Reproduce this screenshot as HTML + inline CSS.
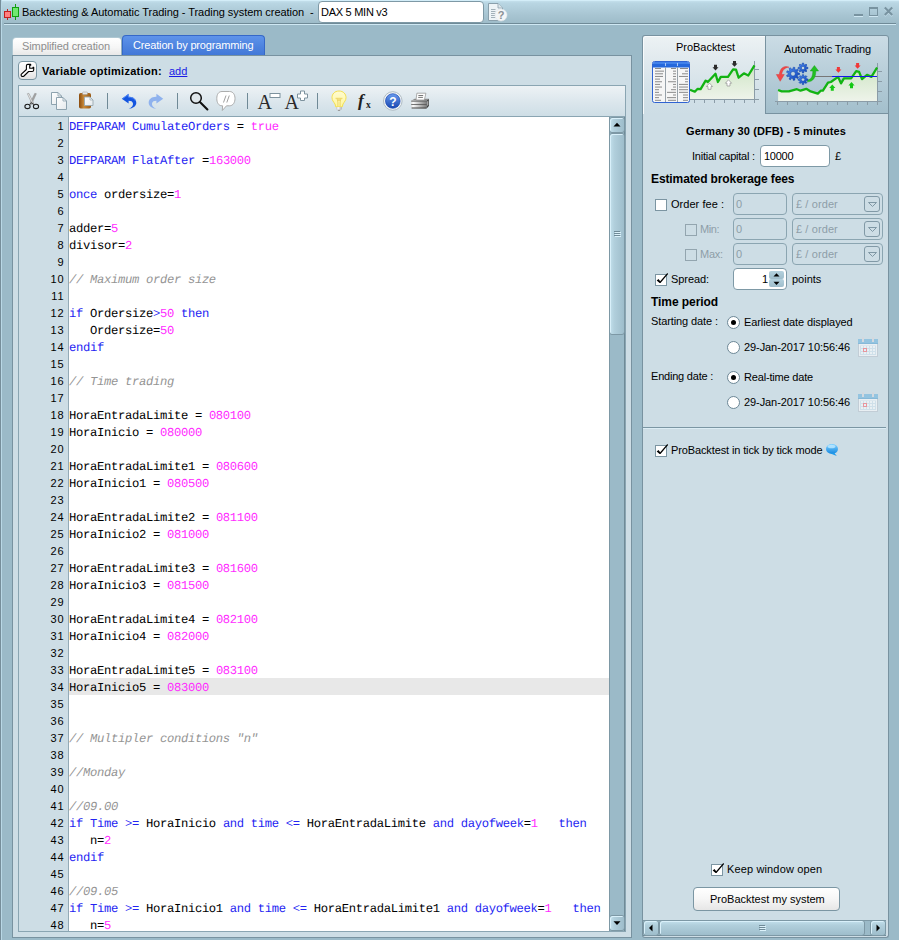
<!DOCTYPE html>
<html>
<head>
<meta charset="utf-8">
<title>Backtesting &amp; Automatic Trading</title>
<style>
*{box-sizing:border-box;margin:0;padding:0}
html,body{width:899px;height:940px;overflow:hidden}
body{background:#9bbac8;font-family:"Liberation Sans",sans-serif;font-size:11px;color:#000;position:relative}
.abs{position:absolute}
.t{position:absolute;white-space:nowrap;line-height:14px;height:14px}
.b{font-weight:bold}
/* window chrome */
#wl0{left:0;top:0;width:1px;height:940px;background:#768e9a}
#wl1{left:1px;top:0;width:1px;height:940px;background:#b9d8e6}
#titlebar{left:2px;top:0;width:897px;height:23px;background:linear-gradient(#c9e4f0 0,#b9d6e3 3px,#a9c6d3 14px,#9ebcc9 23px)}
#ttop{left:0;top:0;width:899px;height:1px;background:#d3edf8}
#tline1{left:4px;top:23px;width:892px;height:1px;background:#6f8a97}
#tline2{left:4px;top:24px;width:892px;height:1px;background:#cfe8f3}
/* panels */
.panel{background:#cddde5;border:1px solid #7892a0}
#lpanel{left:12px;top:55px;width:620px;height:883px}
#rpanel{left:642px;top:113px;width:247px;height:825px;border-top:none;border-radius:0 0 3px 3px}
/* tabs */
.tab{position:absolute;border:1px solid #7892a0;border-bottom:none;border-radius:3px 3px 0 0}
#tab1{left:13px;top:38px;width:108px;height:17px;background:linear-gradient(#ffffff,#f6f6f6 55%,#e8e8e8);border:none;box-shadow:0 -1px 0 0 #afc8d3,-1px 0 0 0 #afc8d3,1px 0 0 0 #93b0bd}
#tab2{left:122px;top:35px;width:143px;height:20px;border-radius:4px 4px 0 0;background:linear-gradient(#5e93ea,#4f85e0 50%,#4278d8);border-color:#3568c8;color:#fff}
/* inputs */
.inp{position:absolute;border:1px solid #7e99a6;border-radius:4px;background:#fff;height:22px}
.inp.dis{background:#cddde5;border-color:#8ba5b1;color:#8d9ea8}
.cb{position:absolute;width:12px;height:12px;border:1px solid #7c95a2;background:#fff}
.cb.dis{background:#cddde5;border-color:#93a5af}
.radio{position:absolute;width:13px;height:13px;border:1px solid #6c8796;border-radius:50%;background:#fff}
.radio.on:after{content:"";position:absolute;left:3px;top:3px;width:5px;height:5px;border-radius:50%;background:#000}
.grey{color:#8d9ea8}
/* code */
#codearea{left:18px;top:116px;width:608px;height:816px;border:1px solid #8aa5b2;background:#fff;overflow:hidden}
#gutter{left:0;top:0;width:49px;height:814px;background:#cddde5}
#gutline{left:49px;top:0;width:1px;height:814px;background:#93aab6}
.ln{position:absolute;left:0;width:45.5px;text-align:right;font-size:11px;letter-spacing:0.9px;line-height:17px;height:17px;color:#000;padding-top:1px}
.cl{position:absolute;left:50px;white-space:pre;font-family:"Liberation Mono",monospace;font-size:12.2px;letter-spacing:-0.32px;text-rendering:geometricPrecision;line-height:17px;height:17px;color:#000;padding-top:2px}
.k{color:#2424f2}
.n{color:#ff2cff}
.c{color:#949494;font-style:italic}

#toolbar{left:18px;top:85px;width:608px;height:32px;border:1px solid #8aa5b2;background:linear-gradient(#edf2f5,#dbe6ec 55%,#cedee6)}
#wrench{left:18px;top:61px;width:19px;height:19px;border:1px solid #7a95a2;border-radius:4px;background:linear-gradient(#ffffff,#f2f2f2 55%,#e2e2e2)}
.sep{position:absolute;top:93px;width:1px;height:16px;background:#6f8996}
/* vertical scrollbar */
#vsb{left:609px;top:117px;width:16px;height:814px;background:#9bbac8;border-left:1px solid #7d98a5;border-right:1px solid #6f8a97}
.sbtn{position:absolute;border:1px solid #7d98a5;border-radius:3px;box-shadow:inset 1px 1px 0 #d9f0fa}
.vgrad{background:linear-gradient(90deg,#c3e0ec,#b1cfdc 30%,#9ebdcb)}
.hgrad{background:linear-gradient(#c3e0ec,#b1cfdc 30%,#9ebdcb)}
#svgall{left:0;top:0;width:899px;height:940px;pointer-events:none}
a.lnk{color:#1a1ae6;text-decoration:underline}

#rtab1{left:642px;top:35px;width:124px;height:79px;border:1px solid #7892a0;border-bottom:none;border-radius:3px 0 0 0;background:linear-gradient(#edf2f4,#e3ebef 25%,#d3e1e8 70%,#cddde5);box-shadow:inset 1px 1px 0 #f8fbfc}
#rtab2{left:765px;top:35px;width:124px;height:79px;border:1px solid #7892a0;border-radius:0 3px 0 0;background:linear-gradient(#cbdce5,#b9cfda 45%,#a3bfcc)}
.combo{position:absolute;height:22px;width:91px;border:1px solid #8ba5b1;border-radius:4px;background:#cddde5}
.combo i{position:absolute;right:2px;top:2px;width:16px;height:16px;border:1px solid #8199a6;border-radius:3px}
#rsep{left:643px;top:427px;width:243px;height:2px;background:linear-gradient(#7b96a3 50%,#dcedf5 50%)}
#btn{left:693px;top:887px;width:147px;height:24px;border:1px solid #7b96a3;border-radius:4px;background:linear-gradient(#ffffff,#f6f6f6 50%,#e6e6e6)}
#hsb{left:643px;top:920px;width:243px;height:16px;background:#9bbac8;border-top:1px solid #7d98a5;border-bottom:1px solid #6f8a97}
.spin{position:absolute;left:769px;width:15px;height:8px;background:linear-gradient(#b4d1de,#9fbdcb);border-radius:2px}
</style>
</head>
<body>
<div class="abs" id="titlebar"></div>
<div class="abs" id="ttop"></div>
<div class="abs" id="wl0"></div>
<div class="abs" id="wl1"></div>
<div class="abs" id="tline1"></div>
<div class="abs" id="tline2"></div>

<!-- TITLE -->
<div class="inp" style="left:318px;top:1px;width:166px;height:22px"></div>

<!-- LEFT PANEL -->
<div class="abs panel" id="lpanel"></div>
<div class="tab" id="tab1"></div>
<div class="tab" id="tab2"></div>


<div class="abs" id="wrench"></div>
<div class="t" style="left:169px;top:64px"><a class="lnk">add</a></div>
<div class="abs" id="toolbar"></div>
<div class="sep" style="left:107px"></div><div class="sep" style="left:177px"></div><div class="sep" style="left:247px"></div><div class="sep" style="left:317px"></div>
<!-- CODE AREA -->
<div class="abs" id="codearea">
<div class="abs" id="gutter"></div>
<div class="abs" id="gutline"></div>
<div class="abs" style="left:50px;top:561px;width:541px;height:17px;background:#e8e8e8"></div>
<div class="ln" style="top:0px">1</div>
<div class="cl" style="top:0px"><span class="k">DEFPARAM CumulateOrders</span> = <span class="n">true</span></div>
<div class="ln" style="top:17px">2</div>
<div class="ln" style="top:34px">3</div>
<div class="cl" style="top:34px"><span class="k">DEFPARAM FlatAfter</span> =<span class="n">163000</span></div>
<div class="ln" style="top:51px">4</div>
<div class="ln" style="top:68px">5</div>
<div class="cl" style="top:68px"><span class="k">once</span> ordersize=<span class="n">1</span></div>
<div class="ln" style="top:85px">6</div>
<div class="ln" style="top:102px">7</div>
<div class="cl" style="top:102px">adder=<span class="n">5</span></div>
<div class="ln" style="top:119px">8</div>
<div class="cl" style="top:119px">divisor=<span class="n">2</span></div>
<div class="ln" style="top:136px">9</div>
<div class="ln" style="top:153px">10</div>
<div class="cl" style="top:153px"><span class="c">// Maximum order size</span></div>
<div class="ln" style="top:170px">11</div>
<div class="ln" style="top:187px">12</div>
<div class="cl" style="top:187px"><span class="k">if</span> Ordersize<span class="k">&gt;</span><span class="n">50</span><span class="k"> then</span></div>
<div class="ln" style="top:204px">13</div>
<div class="cl" style="top:204px">   Ordersize=<span class="n">50</span></div>
<div class="ln" style="top:221px">14</div>
<div class="cl" style="top:221px"><span class="k">endif</span></div>
<div class="ln" style="top:238px">15</div>
<div class="ln" style="top:255px">16</div>
<div class="cl" style="top:255px"><span class="c">// Time trading</span></div>
<div class="ln" style="top:272px">17</div>
<div class="ln" style="top:289px">18</div>
<div class="cl" style="top:289px">HoraEntradaLimite = <span class="n">080100</span></div>
<div class="ln" style="top:306px">19</div>
<div class="cl" style="top:306px">HoraInicio = <span class="n">080000</span></div>
<div class="ln" style="top:323px">20</div>
<div class="ln" style="top:340px">21</div>
<div class="cl" style="top:340px">HoraEntradaLimite1 = <span class="n">080600</span></div>
<div class="ln" style="top:357px">22</div>
<div class="cl" style="top:357px">HoraInicio1 = <span class="n">080500</span></div>
<div class="ln" style="top:374px">23</div>
<div class="ln" style="top:391px">24</div>
<div class="cl" style="top:391px">HoraEntradaLimite2 = <span class="n">081100</span></div>
<div class="ln" style="top:408px">25</div>
<div class="cl" style="top:408px">HoraInicio2 = <span class="n">081000</span></div>
<div class="ln" style="top:425px">26</div>
<div class="ln" style="top:442px">27</div>
<div class="cl" style="top:442px">HoraEntradaLimite3 = <span class="n">081600</span></div>
<div class="ln" style="top:459px">28</div>
<div class="cl" style="top:459px">HoraInicio3 = <span class="n">081500</span></div>
<div class="ln" style="top:476px">29</div>
<div class="ln" style="top:493px">30</div>
<div class="cl" style="top:493px">HoraEntradaLimite4 = <span class="n">082100</span></div>
<div class="ln" style="top:510px">31</div>
<div class="cl" style="top:510px">HoraInicio4 = <span class="n">082000</span></div>
<div class="ln" style="top:527px">32</div>
<div class="ln" style="top:544px">33</div>
<div class="cl" style="top:544px">HoraEntradaLimite5 = <span class="n">083100</span></div>
<div class="ln" style="top:561px">34</div>
<div class="cl" style="top:561px">HoraInicio5 = <span class="n">083000</span></div>
<div class="ln" style="top:578px">35</div>
<div class="ln" style="top:595px">36</div>
<div class="ln" style="top:612px">37</div>
<div class="cl" style="top:612px"><span class="c">// Multipler conditions "n"</span></div>
<div class="ln" style="top:629px">38</div>
<div class="ln" style="top:646px">39</div>
<div class="cl" style="top:646px"><span class="c">//Monday</span></div>
<div class="ln" style="top:663px">40</div>
<div class="ln" style="top:680px">41</div>
<div class="cl" style="top:680px"><span class="c">//09.00</span></div>
<div class="ln" style="top:697px">42</div>
<div class="cl" style="top:697px"><span class="k">if Time &gt;=</span> HoraInicio <span class="k">and time &lt;=</span> HoraEntradaLimite <span class="k">and dayofweek</span>=<span class="n">1</span><span class="k">   then</span></div>
<div class="ln" style="top:714px">43</div>
<div class="cl" style="top:714px">   n=<span class="n">2</span></div>
<div class="ln" style="top:731px">44</div>
<div class="cl" style="top:731px"><span class="k">endif</span></div>
<div class="ln" style="top:748px">45</div>
<div class="ln" style="top:765px">46</div>
<div class="cl" style="top:765px"><span class="c">//09.05</span></div>
<div class="ln" style="top:782px">47</div>
<div class="cl" style="top:782px"><span class="k">if Time &gt;=</span> HoraInicio1 <span class="k">and time &lt;=</span> HoraEntradaLimite1 <span class="k">and dayofweek</span>=<span class="n">1</span><span class="k">   then</span></div>
<div class="ln" style="top:799px">48</div>
<div class="cl" style="top:799px">   n=<span class="n">5</span></div>
</div>


<!-- V SCROLLBAR -->
<div class="abs" id="vsb"></div>
<div class="sbtn vgrad" style="left:609px;top:117px;width:16px;height:16px"></div>
<div class="sbtn vgrad" style="left:609px;top:133px;width:16px;height:202px"></div>
<div class="sbtn vgrad" style="left:609px;top:915px;width:16px;height:16px"></div>

<!-- RIGHT PANEL -->
<div class="abs panel" id="rpanel"></div>
<div class="abs" id="rtab2"></div>
<div class="abs" id="rtab1"></div>
<div class="inp" style="left:760px;top:145px;width:70px"></div>
<div class="cb" style="left:655px;top:199px"></div>
<div class="cb dis" style="left:685px;top:224px"></div>
<div class="cb dis" style="left:685px;top:249px"></div>
<div class="inp dis" style="left:733px;top:193px;width:54px"></div>
<div class="inp dis" style="left:733px;top:218px;width:54px"></div>
<div class="inp dis" style="left:733px;top:243px;width:54px"></div>
<div class="combo" style="left:792px;top:193px"><i></i></div>
<div class="combo" style="left:792px;top:218px"><i></i></div>
<div class="combo" style="left:792px;top:243px"><i></i></div>
<div class="cb" style="left:655px;top:274px"></div>
<div class="inp" style="left:733px;top:268px;width:54px"></div>
<div class="spin" style="top:271px"></div><div class="spin" style="top:279px"></div>
<div class="radio on" style="left:727px;top:316px"></div>
<div class="radio" style="left:727px;top:341px"></div>
<div class="radio on" style="left:727px;top:371px"></div>
<div class="radio" style="left:727px;top:396px"></div>
<div class="abs" id="rsep"></div>
<div class="cb" style="left:655px;top:445px"></div>
<div class="cb" style="left:711px;top:864px"></div>
<div class="abs" id="btn"></div>
<div class="abs" id="hsb"></div>
<div class="sbtn hgrad" style="left:643px;top:920px;width:16px;height:16px"></div>
<div class="sbtn hgrad" style="left:659px;top:920px;width:206px;height:16px"></div>
<div class="sbtn hgrad" style="left:870px;top:920px;width:16px;height:16px"></div>



<!-- TEXTS -->
<!--TEXTS-START-->
<div class="t" style="left:22px;top:5px;letter-spacing:-0.05px">Backtesting &amp; Automatic Trading - Trading system creation&nbsp; -</div>
<div class="t" style="left:321px;top:5px;letter-spacing:-0.27px">DAX 5 MIN v3</div>
<div class="t" style="left:22px;top:39px;color:#8e8e8e;letter-spacing:-0.10px">Simplified creation</div>
<div class="t" style="left:133px;top:38px;color:#fff;letter-spacing:-0.16px">Creation by programming</div>
<div class="t b" style="left:42px;top:64px;letter-spacing:0.28px">Variable optimization:</div>
<div class="t" style="left:676px;top:40px;letter-spacing:-0.03px">ProBacktest</div>
<div class="t" style="left:784px;top:42px;letter-spacing:-0.09px">Automatic Trading</div>
<div class="t b" style="left:686px;top:124px;letter-spacing:0.10px">Germany 30 (DFB) - 5 minutes</div>
<div class="t" style="left:692px;top:149px;letter-spacing:-0.22px">Initial capital :</div>
<div class="t" style="left:764px;top:149px;letter-spacing:-0.25px">10000</div>
<div class="t" style="left:835px;top:149px">&pound;</div>
<div class="t b" style="left:651px;top:172px;font-size:12px;letter-spacing:-0.11px">Estimated brokerage fees</div>
<div class="t" style="left:671px;top:197px;letter-spacing:0.04px">Order fee :</div>
<div class="t" style="left:700px;top:222px;color:#8d9ea8;letter-spacing:-0.40px">Min:</div>
<div class="t" style="left:700px;top:247px;color:#8d9ea8;letter-spacing:-0.28px">Max:</div>
<div class="t" style="left:736px;top:197px;color:#8d9ea8">0</div>
<div class="t" style="left:736px;top:222px;color:#8d9ea8">0</div>
<div class="t" style="left:736px;top:247px;color:#8d9ea8">0</div>
<div class="t" style="left:796px;top:197px;color:#8d9ea8;letter-spacing:0.10px">&pound; / order</div>
<div class="t" style="left:796px;top:222px;color:#8d9ea8;letter-spacing:0.10px">&pound; / order</div>
<div class="t" style="left:796px;top:247px;color:#8d9ea8;letter-spacing:0.10px">&pound; / order</div>
<div class="t" style="left:671px;top:272px;letter-spacing:-0.07px">Spread:</div>
<div class="t" style="left:762px;top:272px">1</div>
<div class="t" style="left:792px;top:272px">points</div>
<div class="t b" style="left:651px;top:295px;font-size:12px;letter-spacing:-0.07px">Time period</div>
<div class="t" style="left:651px;top:314px;letter-spacing:-0.11px">Starting date :</div>
<div class="t" style="left:744px;top:315px;letter-spacing:-0.09px">Earliest date displayed</div>
<div class="t" style="left:744px;top:340px;letter-spacing:-0.08px">29-Jan-2017 10:56:46</div>
<div class="t" style="left:651px;top:369px;letter-spacing:-0.21px">Ending date :</div>
<div class="t" style="left:744px;top:370px;letter-spacing:-0.18px">Real-time date</div>
<div class="t" style="left:744px;top:395px;letter-spacing:-0.08px">29-Jan-2017 10:56:46</div>
<div class="t" style="left:671px;top:443px;letter-spacing:-0.12px">ProBacktest in tick by tick mode</div>
<div class="t" style="left:727px;top:862px;letter-spacing:0.14px">Keep window open</div>
<div class="t" style="left:710px;top:892px;letter-spacing:-0.01px">ProBacktest my system</div>
<!--TEXTS-END-->

<!-- ICONS -->
<svg class="abs" id="svgall" viewBox="0 0 899 940">
<defs>
<linearGradient id="gBlue" x1="0" y1="0" x2="0" y2="1"><stop offset="0" stop-color="#6a9cf0"/><stop offset="1" stop-color="#1846b0"/></linearGradient>
<linearGradient id="gBrown" x1="0" y1="0" x2="1" y2="0"><stop offset="0" stop-color="#8a4a0c"/><stop offset=".4" stop-color="#c88a3a"/><stop offset="1" stop-color="#9a5a14"/></linearGradient>
<linearGradient id="gGrey" x1="0" y1="0" x2="0" y2="1"><stop offset="0" stop-color="#f4f4f4"/><stop offset="1" stop-color="#7a7a7a"/></linearGradient>
<linearGradient id="gPage" x1="0" y1="0" x2="1" y2="1"><stop offset="0" stop-color="#ffffff"/><stop offset="1" stop-color="#e4e9ec"/></linearGradient>
<linearGradient id="gArea" x1="0" y1="0" x2="0" y2="1"><stop offset="0" stop-color="#cfe6c6"/><stop offset="1" stop-color="#eef3ea"/></linearGradient>
<linearGradient id="gGear" x1="0" y1="0" x2="1" y2="1"><stop offset="0" stop-color="#4f8df0"/><stop offset="1" stop-color="#0c3fb4"/></linearGradient>
<linearGradient id="gBub" x1="0" y1="0" x2="0" y2="1"><stop offset="0" stop-color="#7fd0ff"/><stop offset="1" stop-color="#1488e0"/></linearGradient>
<linearGradient id="gPrn" x1="0" y1="0" x2="1" y2="0"><stop offset="0" stop-color="#dcdcdc"/><stop offset=".12" stop-color="#fbfbfb"/><stop offset="1" stop-color="#7c7c7c"/></linearGradient>
<linearGradient id="gBulb" x1="0" y1="0" x2="0" y2="1"><stop offset="0" stop-color="#fffbd2"/><stop offset=".35" stop-color="#fffac0"/><stop offset="1" stop-color="#fff59c"/></linearGradient>
<linearGradient id="gBase" x1="0" y1="0" x2="1" y2="0"><stop offset="0" stop-color="#c4c4c4"/><stop offset=".35" stop-color="#f8f8f8"/><stop offset="1" stop-color="#b0b0b0"/></linearGradient>
</defs>

<!-- title candle icon -->
<g shape-rendering="crispEdges">
<rect x="7" y="9" width="1" height="11" fill="#c02020"/><rect x="4" y="11" width="7" height="7" fill="#ff8080" stroke="none"/><rect x="4.5" y="11.5" width="6" height="6" fill="none" stroke="#c02020" stroke-width="1"/>
<rect x="15" y="4" width="1" height="16" fill="#10a010"/><rect x="12" y="7" width="7" height="10" fill="#70e870"/><rect x="12.5" y="7.5" width="6" height="9" fill="none" stroke="#10a010" stroke-width="1"/>
</g>
<!-- window buttons -->
<g shape-rendering="crispEdges">
<rect x="854" y="14" width="9" height="2" fill="#7893a0"/><rect x="854" y="16" width="9" height="1" fill="#cfe7f2"/>
<rect x="869" y="7" width="9" height="2" fill="#7893a0"/><rect x="869" y="9" width="1" height="6" fill="#7893a0"/><rect x="877" y="9" width="1" height="6" fill="#7893a0"/><rect x="869" y="15" width="9" height="1" fill="#7893a0"/><rect x="869" y="16" width="9" height="1" fill="#cfe7f2"/>
</g>
<path d="M884.800 8.800 L892.200 16.200 M892.200 8.800 L884.800 16.200" stroke="#cfe7f2" stroke-width="1.600" fill="none" opacity=".7"/>
<path d="M884.800 7.600 L892.200 15 M892.200 7.600 L884.800 15" stroke="#7893a0" stroke-width="2.100" fill="none"/>
<!-- doc help icon -->
<path d="M488.5 3.5 H498 L502.5 8 V20.5 H488.5 Z" fill="#eef4f7" stroke="#8aa0ac"/>
<path d="M498 3.5 V8 H502.5" fill="#dfe8ec" stroke="#8aa0ac" stroke-width=".8"/>
<path d="M491 9.500 H495.500 M491 11.500 H495.500 M491 13.500 H495.500 M491 15.500 H495.500 M491 17.500 H495.500" stroke="#a3b1b9" stroke-width="1"/>
<circle cx="501" cy="15" r="6" fill="#f4f6f7" stroke="#e2e8eb" stroke-width=".6"/>
<text x="501" y="19" font-family="Liberation Sans" font-weight="bold" font-size="11" fill="#8a8f94" text-anchor="middle">?</text>
<!-- wrench -->
<path d="M21.4 74.2 L26.4 69.5 L26.4 65.800 Q26.4 64.400 27.800 64.400 L30.7 64.400 L30.7 65.200 L29.700 65.200 L29.700 68.300 L33 68.300 L33 67.300 L33.700 67.300 L33.700 69.900 Q33.700 71.500 32.100 71.500 L28.600 71.500 L24 76 Q22.700 77.100 21.500 76 Q20.600 75.100 21.400 74.200 Z" fill="#fff" stroke="#000" stroke-width="1.1" stroke-linejoin="round"/>
<!-- scissors -->
<path d="M27.300 93.700 L28.900 93.300 L33.900 103.600 L32.300 104.600 Z" fill="#b9b9b9" stroke="#8e8e8e" stroke-width=".4"/>
<path d="M36.400 93.700 L34.800 93.300 L29.800 103.600 L31.400 104.600 Z" fill="#a4a4a4" stroke="#7e7e7e" stroke-width=".4"/>
<path d="M28.300 94.200 L32.800 103.200" stroke="#f2f2f2" stroke-width=".7"/>
<ellipse cx="27.500" cy="106.400" rx="2.600" ry="2.200" fill="none" stroke="#1c1c1c" stroke-width="1.100"/>
<ellipse cx="36" cy="106.400" rx="2.600" ry="2.200" fill="none" stroke="#1c1c1c" stroke-width="1.100"/>
<path d="M29.500 104.700 L31.800 102.700 L34 104.700" fill="none" stroke="#333" stroke-width="1"/>
<!-- copy -->
<path d="M51.5 92.5 H58 L61.5 96 V104.5 H51.5 Z" fill="url(#gPage)" stroke="#8da2ae"/>
<path d="M58 92.5 V96 H61.5" fill="none" stroke="#8da2ae" stroke-width=".8"/>
<path d="M56.500 97.500 H63 L66.500 101 V109.500 H56.500 Z" fill="url(#gPage)" stroke="#8da2ae"/>
<path d="M63 97.500 V101 H66.500" fill="none" stroke="#8da2ae" stroke-width=".8"/>
<!-- paste -->
<rect x="79" y="93" width="12" height="15.500" rx="1.8" fill="url(#gBrown)"/>
<rect x="82.500" y="92" width="5" height="2.600" rx=".8" fill="#e8e8e8" stroke="#999" stroke-width=".5"/>
<path d="M84.500 97 H90 L93 100 V105.500 H84.500 Z" fill="url(#gPage)" stroke="#9aa9b2" stroke-width=".9"/>
<path d="M90 97 V100 H93" fill="none" stroke="#9aa9b2" stroke-width=".7"/>
<!-- undo -->
<path d="M121.800 98.700 L128.600 93.800 L128.600 96.800 C133.500 96.600 136.600 99.600 136.300 103.200 C136 106.200 133 108.300 128.800 108.700 C131.600 107.400 133.400 105.600 133 103.400 C132.600 101.400 131 100.700 128.600 100.700 L128.600 103.600 Z" fill="#1455e0"/>
<path d="M122.500 98.700 L128.300 94.600 L128.300 97.200 C131.500 97.100 134.500 98.300 135.600 101" fill="none" stroke="#5f93f5" stroke-width=".8"/>
<!-- redo -->
<path d="M163.200 98.700 L156.400 93.800 L156.400 96.800 C151.500 96.600 148.400 99.600 148.700 103.200 C149 106.200 152 108.300 156.200 108.700 C153.400 107.400 151.600 105.600 152 103.400 C152.400 101.400 154 100.700 156.400 100.700 L156.400 103.600 Z" fill="#8fb2ee"/>
<!-- magnifier -->
<circle cx="196" cy="98" r="5.300" fill="#dfe6ea" stroke="#111" stroke-width="1.500"/>
<path d="M199.900 102 L207.400 109.400" stroke="#111" stroke-width="2.100" stroke-linecap="round"/>
<!-- comment bubble -->
<path d="M222 91.500 H229.500 C233 91.500 235 94.500 235 98.500 C235 102.500 233 105.800 229.500 105.800 H226.500 L222.300 110.500 L222.600 105.800 H222 C218.500 105.800 216.800 102.500 216.800 98.500 C216.800 94.500 218.500 91.500 222 91.500 Z" fill="#fff" stroke="#a4a4a4" stroke-width=".9"/>
<path d="M223.500 102.500 L226 95.500 M226.800 102.500 L229.300 95.500" stroke="#a0a0a0" stroke-width="1"/>
<!-- A- -->
<text x="257.500" y="109" font-family="Liberation Serif" font-size="20" fill="#2a2a2a">A</text>
<rect x="270" y="93.500" width="10" height="4" fill="#fff" stroke="#7d929e" stroke-width="1"/>
<!-- A+ -->
<text x="284.500" y="109" font-family="Liberation Serif" font-size="20" fill="#2a2a2a">A</text>
<path d="M300.500 91 H304.500 V94 H307.500 V98 H304.500 V100.500 H300.500 V98 H297.500 V94 H300.500 Z" fill="#fff" stroke="#7d929e" stroke-width="1"/>
<!-- bulb -->
<path d="M339 91 C334.500 91 332 94.200 332 97.600 C332 100.300 333.600 101.800 335 104 L335.800 106.900 H342.200 L343 104 C344.400 101.800 346 100.300 346 97.600 C346 94.200 343.500 91 339 91 Z" fill="url(#gBulb)" stroke="#f3de48" stroke-width=".95"/>
<path d="M335.500 98.300 H342.500 M337 98.500 L337.900 102 V106.500 M341 98.500 L340.100 102 V106.500 M337.900 98.800 L339 101 L340.100 98.800" fill="none" stroke="#e8cd55" stroke-width=".8"/>
<rect x="336.200" y="107" width="5.600" height="2.700" rx=".6" fill="url(#gBase)"/>
<path d="M337.400 109.700 H340.600 L339.900 110.900 H338.100 Z" fill="#9c9c9c"/>
<!-- fx -->
<text x="358" y="105.800" font-family="Liberation Serif" font-style="italic" font-weight="bold" font-size="17.500" fill="#1f1f1f">f</text>
<text x="366" y="108" font-family="Liberation Serif" font-weight="bold" font-size="9.500" fill="#1f1f1f">x</text>
<!-- help -->
<circle cx="392.800" cy="101" r="9.300" fill="#f2f5f7" stroke="#a9b5bd" stroke-width=".9"/>
<circle cx="392.800" cy="101" r="7.300" fill="url(#gBlue)" stroke="#1a49b0" stroke-width=".7"/>
<text x="392.800" y="105.500" font-family="Liberation Sans" font-weight="bold" font-size="12" fill="#fff" text-anchor="middle">?</text>
<!-- printer -->
<path d="M411.300 100.800 L414.600 98.700 H428.900 L426.600 100.800 Z" fill="#8c8c8c"/>
<rect x="411.200" y="100.600" width="15.400" height="8" rx=".8" fill="url(#gPrn)"/>
<rect x="411.200" y="100.600" width="15.400" height="1.200" fill="#6a6a6a" opacity=".85"/>
<rect x="411.200" y="104.100" width="15.400" height=".9" fill="#585858" opacity=".9"/>
<rect x="411.600" y="107.400" width="15" height="1.200" fill="#505050" opacity=".9"/>
<path d="M426.600 100.800 L428.900 98.700 V106 L426.600 108.400 Z" fill="#3f3f3f"/>
<path d="M427.300 101.600 L428.200 100.800 V105 L427.300 105.900 Z" fill="#cfcfcf"/>
<path d="M416.900 93.200 H425.900 L424.400 100 H416 Z" fill="#fdfdfd" stroke="#8e8e8e" stroke-width=".7"/>
<path d="M418.400 95.500 H423.200 M418.200 97.400 H422.900" stroke="#6a6a6a" stroke-width=".9"/>
<!-- vscroll arrows + grip -->
<path d="M613.500 126.500 L617 122.800 L620.500 126.500 Z" fill="#000"/>
<path d="M613.500 921.300 L617 925 L620.500 921.300 Z" fill="#000"/>
<g shape-rendering="crispEdges"><rect x="614" y="231" width="6" height="1" fill="#6f8a97"/><rect x="614" y="233" width="6" height="1" fill="#6f8a97"/><rect x="614" y="235" width="6" height="1" fill="#6f8a97"/><rect x="615" y="232" width="6" height="1" fill="#dcf2fb"/><rect x="615" y="234" width="6" height="1" fill="#dcf2fb"/><rect x="615" y="236" width="6" height="1" fill="#dcf2fb"/></g>
<!-- probacktest icon -->
<path d="M690.0 89.7 L694.8 91.7 L697.7 88.8 L700.6 89.2 L705.6 80.6 L707.8 82.0 L715.5 73.8 L717.9 82.0 L720.8 76.9 L728.0 76.9 L733.1 69.4 L736.0 69.7 L738.6 77.7 L743.9 73.3 L748.3 75.5 L754.5 65.4 L754.5 99.0 L690.0 99.0 Z" fill="url(#gArea)"/>
<g shape-rendering="crispEdges"><rect x="690" y="99" width="65" height="1" fill="#8b9ca7"/><rect x="754" y="61" width="1" height="42" fill="#8b9ca7"/>
<rect x="694" y="100" width="1" height="3" fill="#8b9ca7"/>
<rect x="704" y="100" width="1" height="3" fill="#8b9ca7"/>
<rect x="714" y="100" width="1" height="3" fill="#8b9ca7"/>
<rect x="724" y="100" width="1" height="3" fill="#8b9ca7"/>
<rect x="734" y="100" width="1" height="3" fill="#8b9ca7"/>
<rect x="744" y="100" width="1" height="3" fill="#8b9ca7"/>
<rect x="754" y="100" width="1" height="3" fill="#8b9ca7"/>
<rect x="755" y="69" width="4" height="1" fill="#8b9ca7"/>
<rect x="755" y="79" width="4" height="1" fill="#8b9ca7"/>
<rect x="755" y="89" width="4" height="1" fill="#8b9ca7"/>
<rect x="755" y="99" width="4" height="1" fill="#8b9ca7"/>
</g>
<polyline points="690.0,89.7 694.8,91.7 697.7,88.8 700.6,89.2 705.6,80.6 707.8,82.0 715.5,73.8 717.9,82.0 720.8,76.9 728.0,76.9 733.1,69.4 736.0,69.7 738.6,77.7 743.9,73.3 748.3,75.5 754.5,65.4" fill="none" stroke="#12b312" stroke-width="2.3" stroke-linejoin="round"/>
<path d="M714.0 64.8 h3 v2.5 h1.5 l-3 3.2 l-3 -3.2 h1.5 Z" fill="#2b2b2b"/>
<path d="M733.0 61.0 h3 v2.5 h1.5 l-3 3.2 l-3 -3.2 h1.5 Z" fill="#2b2b2b"/>
<path d="M708.0 89.3 h3 v-2.8 h1.6 l-3.1 -3.4 l-3.1 3.4 h1.6 Z" fill="#ffffff" stroke="#8f8f8f" stroke-width=".7"/>
<path d="M727.0 86.0 h3 v-2.8 h1.6 l-3.1 -3.4 l-3.1 3.4 h1.6 Z" fill="#ffffff" stroke="#8f8f8f" stroke-width=".7"/>
<rect x="652.5" y="61.5" width="37" height="41" rx="2" fill="#f6f6f6" stroke="#2f63d2"/>
<path d="M653 64 Q653 62 655 62 H687 Q689 62 689 64 V67.500 H653 Z" fill="#2568dc"/>
<rect x="653" y="62" width="36" height="2" fill="#4d8cf0" opacity=".7"/>
<path d="M665.5 63 V66 M677.5 63 V66" stroke="#a9c7f5" stroke-width="1"/>
<path d="M665.5 67 V102 M677.5 67 V102" stroke="#98a2aa" stroke-width="1"/>
<path d="M655 68.50 h6 M671 68.50 H676 M680 68.50 H688 M655 71.15 h9 M673 71.15 H676 M685 71.15 H688 M655 73.80 h8 M673 73.80 H676 M682 73.80 H688 M655 76.45 h8 M673 76.45 H676 M679 76.45 H688 M655 79.10 h5 M673 79.10 H676 M685 79.10 H688 M655 81.75 h7 M668 81.75 H676 M685 81.75 H688 M655 84.40 h5 M673 84.40 H676 M679 84.40 H688 M655 87.05 h7 M673 87.05 H676 M679 87.05 H688 M655 89.70 h4 M671 89.70 H676 M679 89.70 H688 M655 92.35 h4 M667 92.35 H676 M679 92.35 H688 M655 95.00 h7 M673 95.00 H676 M683 95.00 H688 M655 97.65 h4 M667 97.65 H676 M683 97.65 H688 M655 100.30 h6 M668 100.30 H676 M683 100.30 H688" stroke="#8a8a8a" stroke-width="1"/>
<!-- automatic trading icon -->
<path d="M778.1 90.0 L781.7 91.4 L788.9 91.4 L796.9 89.2 L800.5 90.7 L806.3 88.8 L810.6 91.4 L817.8 93.6 L820.7 90.7 L822.9 90.7 L828.0 82.7 L830.9 82.0 L838.1 76.9 L841.0 83.4 L843.9 78.4 L851.1 78.4 L856.2 71.2 L859.1 71.9 L862.0 79.1 L867.0 74.8 L871.4 76.9 L877.1 67.5 L877.1 101.0 L778.1 101.0 Z" fill="url(#gArea)"/>
<g shape-rendering="crispEdges"><rect x="775" y="101" width="103" height="1" fill="#8b9ca7"/><rect x="877" y="63" width="1" height="42" fill="#8b9ca7"/>
<rect x="777" y="102" width="1" height="3" fill="#8b9ca7"/>
<rect x="787" y="102" width="1" height="3" fill="#8b9ca7"/>
<rect x="797" y="102" width="1" height="3" fill="#8b9ca7"/>
<rect x="807" y="102" width="1" height="3" fill="#8b9ca7"/>
<rect x="817" y="102" width="1" height="3" fill="#8b9ca7"/>
<rect x="827" y="102" width="1" height="3" fill="#8b9ca7"/>
<rect x="837" y="102" width="1" height="3" fill="#8b9ca7"/>
<rect x="847" y="102" width="1" height="3" fill="#8b9ca7"/>
<rect x="857" y="102" width="1" height="3" fill="#8b9ca7"/>
<rect x="867" y="102" width="1" height="3" fill="#8b9ca7"/>
<rect x="877" y="102" width="1" height="3" fill="#8b9ca7"/>
<rect x="878" y="71" width="4" height="1" fill="#8b9ca7"/>
<rect x="878" y="81" width="4" height="1" fill="#8b9ca7"/>
<rect x="878" y="91" width="4" height="1" fill="#8b9ca7"/>
<rect x="878" y="101" width="4" height="1" fill="#8b9ca7"/>

</g>
<polyline points="778.1,90.0 781.7,91.4 788.9,91.4 796.9,89.2 800.5,90.7 806.3,88.8 810.6,91.4 817.8,93.6 820.7,90.7 822.9,90.7 828.0,82.7 830.9,82.0 838.1,76.9 841.0,83.4 843.9,78.4 851.1,78.4 856.2,71.2 859.1,71.9 862.0,79.1 867.0,74.8 871.4,76.9 877.1,67.5" fill="none" stroke="#12b312" stroke-width="2.3" stroke-linejoin="round"/>
<g shape-rendering="crispEdges"><rect x="815" y="76" width="17" height="1" fill="#777"/><rect x="832" y="76" width="45" height="1" fill="#1616ea"/></g>
<path d="M836.9 67.0 h3 v2.5 h1.5 l-3 3.2 l-3 -3.2 h1.5 Z" fill="#f03838"/>
<path d="M856.1 63.0 h3 v2.5 h1.5 l-3 3.2 l-3 -3.2 h1.5 Z" fill="#f03838"/>
<path d="M830.8 90.8 h3 v-2.8 h1.6 l-3.1 -3.4 l-3.1 3.4 h1.6 Z" fill="#14c814"/>
<path d="M850.0 88.2 h3 v-2.8 h1.6 l-3.1 -3.4 l-3.1 3.4 h1.6 Z" fill="#14c814"/>
<path d="M789 67.200 C783.500 64.800 779.800 69 779.300 74.500 L776.300 74.500 L780.200 81.300 L784.300 74.500 L781.700 74.500 C782.200 70.500 784.500 67.500 789 67.200 Z" fill="#f04848" stroke="#d83030" stroke-width=".4"/>
<path d="M807.500 81.800 C813.500 81.800 815.800 77 815.800 71 L818.600 71 L814.400 65.500 L810.200 71 L812.800 71 C812.800 76.500 811 79.600 807.500 80 Z" fill="#22c022" stroke="#109810" stroke-width=".4"/>
<path d="M797.71 72.87 L799.55 72.97 L799.55 74.63 L797.71 74.73 L797.21 76.11 L798.55 77.38 L797.48 78.64 L796.01 77.54 L794.74 78.28 L794.95 80.10 L793.32 80.39 L792.90 78.60 L791.45 78.34 L790.44 79.88 L789.01 79.06 L789.84 77.41 L788.89 76.29 L787.13 76.82 L786.56 75.26 L788.26 74.53 L788.26 73.07 L786.56 72.34 L787.13 70.78 L788.89 71.31 L789.84 70.19 L789.01 68.54 L790.44 67.72 L791.45 69.26 L792.90 69.00 L793.32 67.21 L794.95 67.50 L794.74 69.32 L796.01 70.06 L797.48 68.96 L798.55 70.22 L797.21 71.49 Z" fill="url(#gGear)" stroke="#0d3fa8" stroke-width=".5"/><circle cx="793.0" cy="73.8" r="2.3" fill="#c3d6e0" stroke="#0d3fa8" stroke-width=".5"/>
<path d="M806.51 67.21 L807.95 67.30 L807.95 68.70 L806.51 68.79 L806.04 69.93 L807.00 71.00 L806.00 72.00 L804.93 71.04 L803.79 71.51 L803.70 72.95 L802.30 72.95 L802.21 71.51 L801.07 71.04 L800.00 72.00 L799.00 71.00 L799.96 69.93 L799.49 68.79 L798.05 68.70 L798.05 67.30 L799.49 67.21 L799.96 66.07 L799.00 65.00 L800.00 64.00 L801.07 64.96 L802.21 64.49 L802.30 63.05 L803.70 63.05 L803.79 64.49 L804.93 64.96 L806.00 64.00 L807.00 65.00 L806.04 66.07 Z" fill="url(#gGear)" stroke="#0d3fa8" stroke-width=".5"/><circle cx="803.0" cy="68.0" r="1.7" fill="#c3d6e0" stroke="#0d3fa8" stroke-width=".5"/>
<path d="M806.51 78.81 L807.95 78.90 L807.95 80.30 L806.51 80.39 L806.04 81.53 L807.00 82.60 L806.00 83.60 L804.93 82.64 L803.79 83.11 L803.70 84.55 L802.30 84.55 L802.21 83.11 L801.07 82.64 L800.00 83.60 L799.00 82.60 L799.96 81.53 L799.49 80.39 L798.05 80.30 L798.05 78.90 L799.49 78.81 L799.96 77.67 L799.00 76.60 L800.00 75.60 L801.07 76.56 L802.21 76.09 L802.30 74.65 L803.70 74.65 L803.79 76.09 L804.93 76.56 L806.00 75.60 L807.00 76.60 L806.04 77.67 Z" fill="url(#gGear)" stroke="#0d3fa8" stroke-width=".5"/><circle cx="803.0" cy="79.6" r="1.7" fill="#c3d6e0" stroke="#0d3fa8" stroke-width=".5"/>
<!-- checks -->
<path d="M656.7 280.5 L658.5 279.1 L660.2 281.2 L667.3 273.1 L668.1 273.9 L660.5 283.1 L659.6 283.1 Z" fill="#000"/>
<path d="M656.7 451.5 L658.5 450.1 L660.2 452.2 L667.3 444.1 L668.1 444.9 L660.5 454.1 L659.6 454.1 Z" fill="#000"/>
<path d="M712.7 870.5 L714.5 869.1 L716.2 871.2 L723.3 863.1 L724.1 863.9 L716.5 873.1 L715.6 873.1 Z" fill="#000"/>
<path d="M868.500 202.5 H876.500 L872.500 206.5 Z" fill="none" stroke="#7f97a4" stroke-width="1"/>
<path d="M868.500 227.5 H876.500 L872.500 231.5 Z" fill="none" stroke="#7f97a4" stroke-width="1"/>
<path d="M868.500 252.5 H876.500 L872.500 256.5 Z" fill="none" stroke="#7f97a4" stroke-width="1"/>
<path d="M773.500 276.500 L776.500 273.200 L779.500 276.500 Z" fill="#000"/><path d="M773.500 281.700 L776.500 285 L779.500 281.700 Z" fill="#000"/>
<g><rect x="858.5" y="343.5" width="19" height="13" fill="#e9eff3" stroke="#c2cdd6" stroke-width="1"/><rect x="858" y="339" width="20" height="5" fill="#94c4e0"/><rect x="858" y="343" width="20" height="1" fill="#86b9d8"/><rect x="862" y="337" width="2" height="5" fill="#d3d9df"/><rect x="872" y="337" width="2" height="5" fill="#d3d9df"/><rect x="860" y="345.5" width="16" height="9.500" fill="#cfe0ea"/><rect x="861" y="346" width="2" height="2" fill="#e9f0f4"/><rect x="864" y="346" width="2" height="2" fill="#e9f0f4"/><rect x="867" y="346" width="2" height="2" fill="#e9f0f4"/><rect x="870" y="346" width="2" height="2" fill="#e9f0f4"/><rect x="873" y="346" width="2" height="2" fill="#e9f0f4"/><rect x="861" y="349" width="2" height="2" fill="#e9f0f4"/><rect x="864" y="349" width="2" height="2" fill="#e9f0f4"/><rect x="867" y="349" width="2" height="2" fill="#e9f0f4"/><rect x="870" y="349" width="2" height="2" fill="#e9f0f4"/><rect x="873" y="349" width="2" height="2" fill="#e9f0f4"/><rect x="861" y="352" width="2" height="2" fill="#e9f0f4"/><rect x="864" y="352" width="2" height="2" fill="#e9f0f4"/><rect x="867" y="352" width="2" height="2" fill="#e9f0f4"/><rect x="870" y="352" width="2" height="2" fill="#e9f0f4"/><rect x="873" y="352" width="2" height="2" fill="#e9f0f4"/><rect x="863.5" y="348.5" width="3" height="3" fill="#dff1f9" stroke="#e8959d" stroke-width="1"/></g>
<g><rect x="858.5" y="398.5" width="19" height="13" fill="#e9eff3" stroke="#c2cdd6" stroke-width="1"/><rect x="858" y="394" width="20" height="5" fill="#94c4e0"/><rect x="858" y="398" width="20" height="1" fill="#86b9d8"/><rect x="862" y="392" width="2" height="5" fill="#d3d9df"/><rect x="872" y="392" width="2" height="5" fill="#d3d9df"/><rect x="860" y="400.5" width="16" height="9.500" fill="#cfe0ea"/><rect x="861" y="401" width="2" height="2" fill="#e9f0f4"/><rect x="864" y="401" width="2" height="2" fill="#e9f0f4"/><rect x="867" y="401" width="2" height="2" fill="#e9f0f4"/><rect x="870" y="401" width="2" height="2" fill="#e9f0f4"/><rect x="873" y="401" width="2" height="2" fill="#e9f0f4"/><rect x="861" y="404" width="2" height="2" fill="#e9f0f4"/><rect x="864" y="404" width="2" height="2" fill="#e9f0f4"/><rect x="867" y="404" width="2" height="2" fill="#e9f0f4"/><rect x="870" y="404" width="2" height="2" fill="#e9f0f4"/><rect x="873" y="404" width="2" height="2" fill="#e9f0f4"/><rect x="861" y="407" width="2" height="2" fill="#e9f0f4"/><rect x="864" y="407" width="2" height="2" fill="#e9f0f4"/><rect x="867" y="407" width="2" height="2" fill="#e9f0f4"/><rect x="870" y="407" width="2" height="2" fill="#e9f0f4"/><rect x="873" y="407" width="2" height="2" fill="#e9f0f4"/><rect x="863.5" y="403.5" width="3" height="3" fill="#dff1f9" stroke="#e8959d" stroke-width="1"/></g>
<ellipse cx="832" cy="449" rx="6" ry="5" fill="url(#gBub)"/><path d="M834 452.500 L836.800 456 L830.500 453.500 Z" fill="#1e9aea"/><ellipse cx="831.500" cy="446.500" rx="4" ry="1.800" fill="#c8ecff" opacity=".75"/>
<path d="M652.500 924.500 L649 928 L652.500 931.500 Z" fill="#000"/><path d="M876.500 924.500 L880 928 L876.500 931.500 Z" fill="#000"/>
<g shape-rendering="crispEdges"><rect x="759" y="925" width="6" height="1" fill="#6f8a97"/><rect x="759" y="927" width="6" height="1" fill="#6f8a97"/><rect x="759" y="929" width="6" height="1" fill="#6f8a97"/><rect x="760" y="926" width="6" height="1" fill="#dcf2fb"/><rect x="760" y="928" width="6" height="1" fill="#dcf2fb"/><rect x="760" y="930" width="6" height="1" fill="#dcf2fb"/></g>
<!--ICONS-BODY-->
</svg>
</body>
</html>
